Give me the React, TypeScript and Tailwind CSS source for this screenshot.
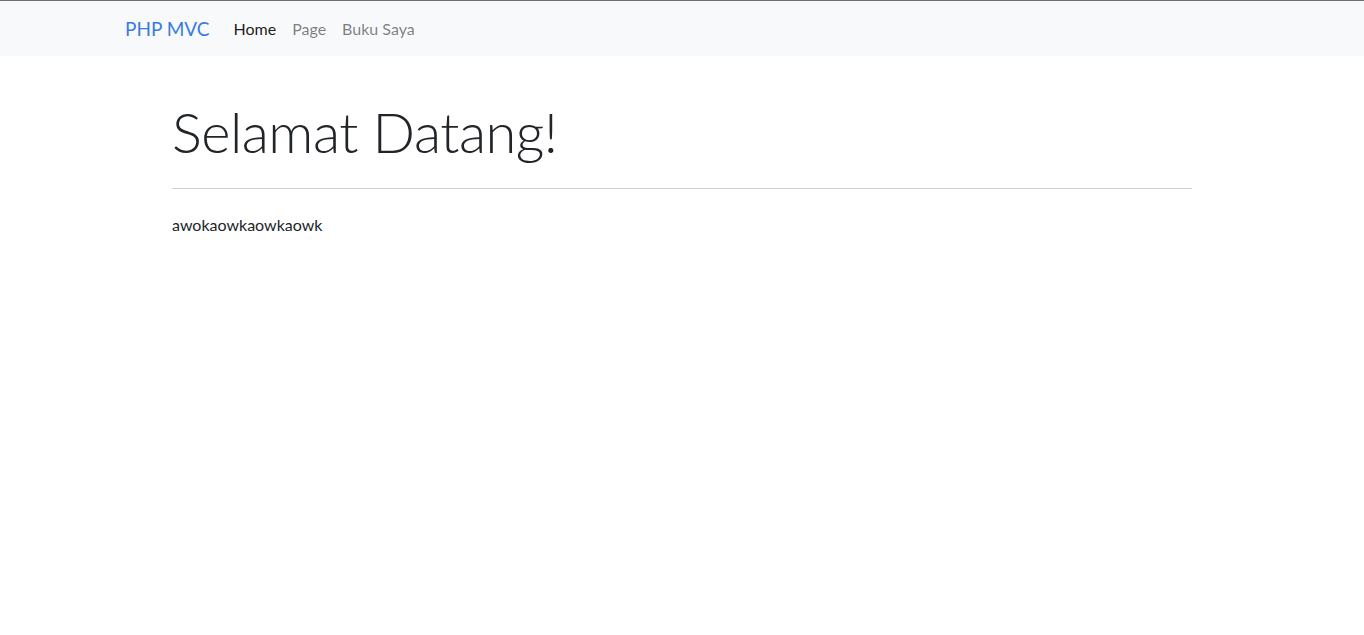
import React from "react";

const font = "font-['Lato','Noto_Sans',sans-serif]";

export default function App() {
  return (
    <div className={`min-h-screen bg-white ${font}`}>
      <nav className="h-[56px] border-t border-[#6e6e6e] bg-[#f8f9fa]">
        <div className="mx-auto flex h-full w-[1140px] items-center px-[13px]">
          <a href="#" className="mr-[16px] text-[19px] leading-[30px] text-[#3a7be0]">
            PHP MVC
          </a>
          <ul className="flex items-center text-[16px] leading-6">
            <li>
              <a href="#" className="block px-2 text-black/90">
                Home
              </a>
            </li>
            <li>
              <a href="#" className="block px-2 text-black/50">
                Page
              </a>
            </li>
            <li>
              <a href="#" className="block px-2 text-black/50">
                Buku Saya
              </a>
            </li>
          </ul>
        </div>
      </nav>

      <main className="mx-auto w-[1020px] pt-[42px]">
        <h1 className="text-[56px] font-light leading-[1.2] tracking-[-0.5px] text-[#212529]">
          Selamat Datang!
        </h1>
        <hr className="mt-[23px] mb-[24px] border-t border-[#cfcfcf]" />
        <p className="text-[16px] leading-6 text-[#212529]">awokaowkaowkaowk</p>
      </main>
    </div>
  );
}
